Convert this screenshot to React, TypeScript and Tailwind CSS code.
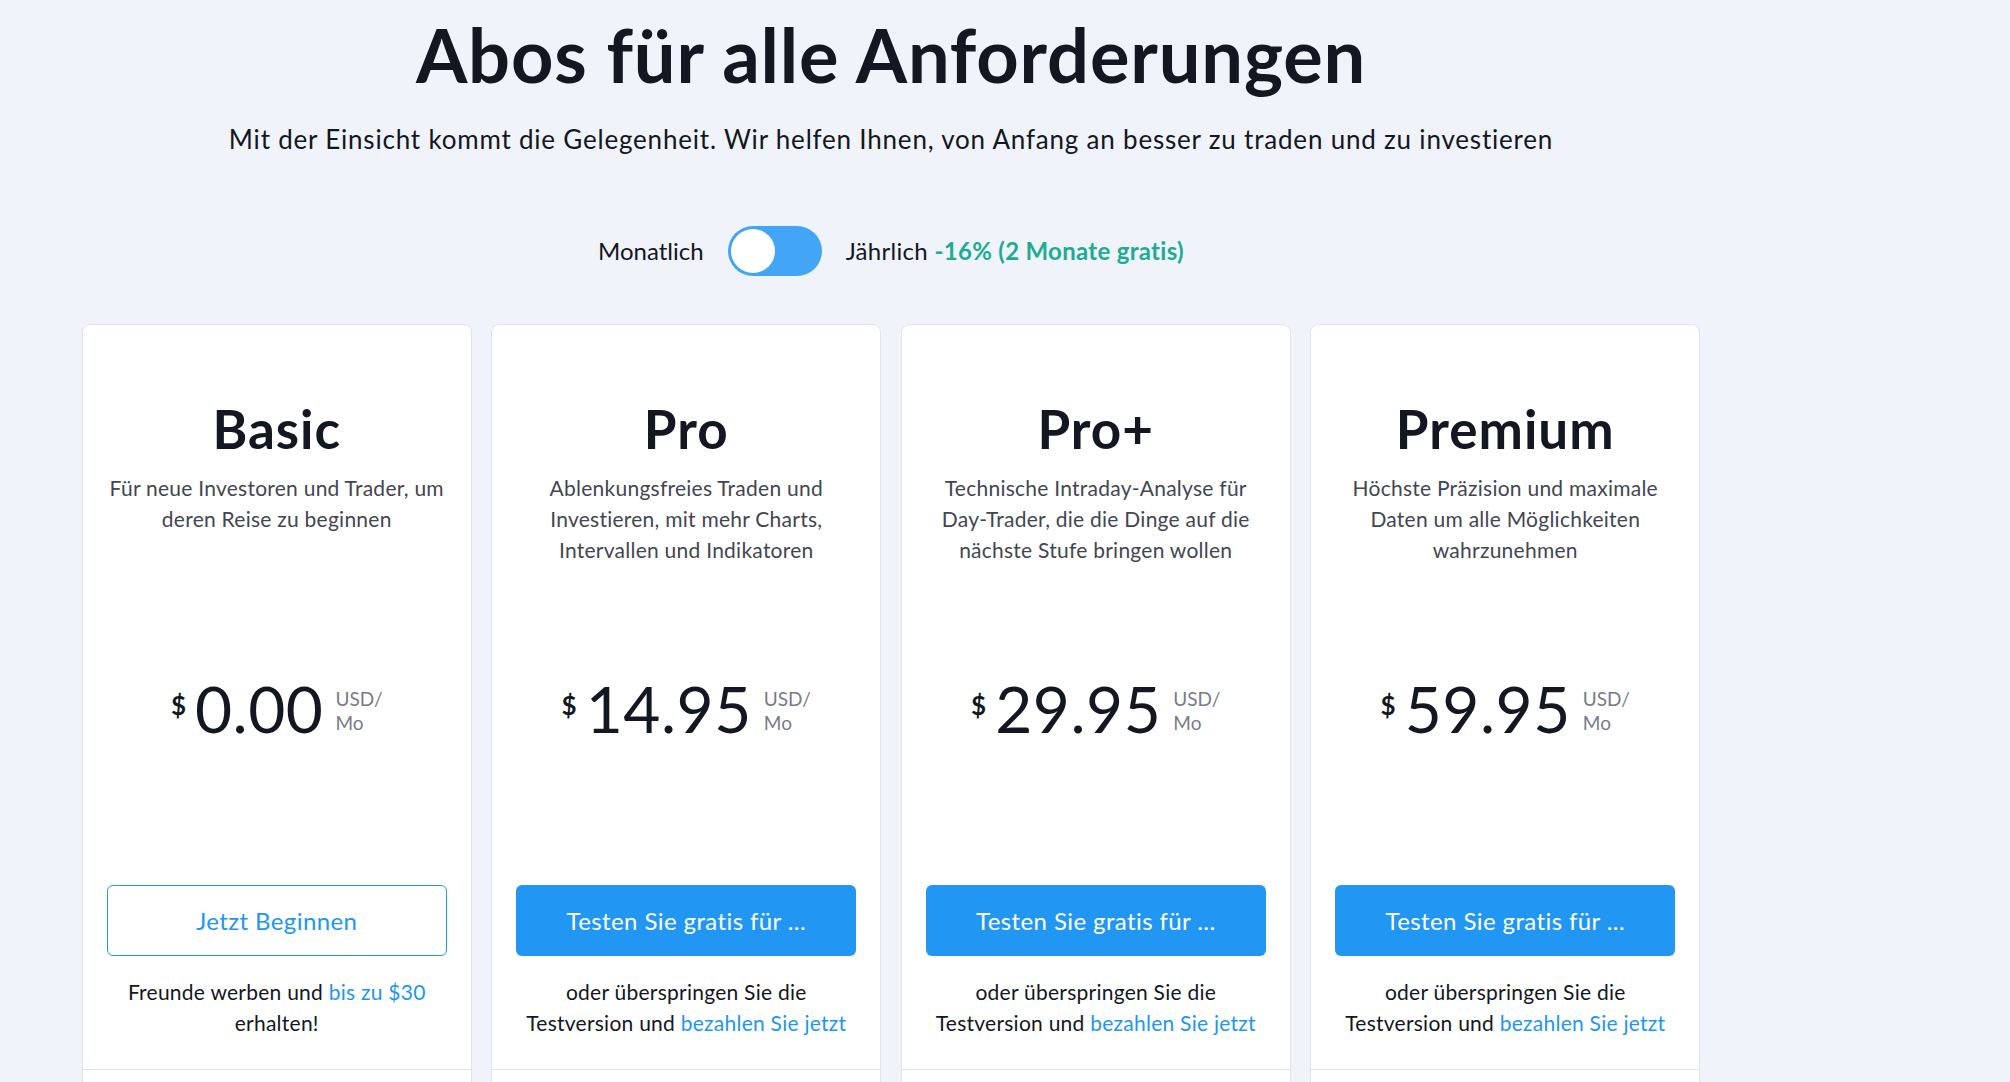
import React, { useState } from "react";

type Plan = {
  name: string;
  lines: string[];
  price: string;
  cta: string;
  outline?: boolean;
  note: [string, string, string];
};

const plans: Plan[] = [
  {
    name: "Basic",
    lines: ["Für neue Investoren und Trader, um", "deren Reise zu beginnen"],
    price: "0.00",
    cta: "Jetzt Beginnen",
    outline: true,
    note: ["Freunde werben und ", "bis zu $30", "erhalten!"],
  },
  {
    name: "Pro",
    lines: ["Ablenkungsfreies Traden und", "Investieren, mit mehr Charts,", "Intervallen und Indikatoren"],
    price: "14.95",
    cta: "Testen Sie gratis für ...",
    note: ["oder überspringen Sie die", "Testversion und ", "bezahlen Sie jetzt"],
  },
  {
    name: "Pro+",
    lines: ["Technische Intraday-Analyse für", "Day-Trader, die die Dinge auf die", "nächste Stufe bringen wollen"],
    price: "29.95",
    cta: "Testen Sie gratis für ...",
    note: ["oder überspringen Sie die", "Testversion und ", "bezahlen Sie jetzt"],
  },
  {
    name: "Premium",
    lines: ["Höchste Präzision und maximale", "Daten um alle Möglichkeiten", "wahrzunehmen"],
    price: "59.95",
    cta: "Testen Sie gratis für ...",
    note: ["oder überspringen Sie die", "Testversion und ", "bezahlen Sie jetzt"],
  },
];

const PlanCard: React.FC<{ plan: Plan }> = ({ plan }) => {
  return (
    <div className="bg-white rounded-lg border border-[#e0e3eb] overflow-hidden">
      <div className="px-6 pt-[74px] pb-[31px] flex flex-col items-center text-center">
        <h2 className="text-[53px] leading-[60px] font-bold tracking-[1px] text-[#131722]">{plan.name}</h2>
        <p className="mt-[13px] h-[93px] text-[21px] leading-[31px] tracking-[0.25px] text-[#434651] whitespace-nowrap">
          {plan.lines.map((line, i) => (
            <React.Fragment key={i}>
              {line}
              {i < plan.lines.length - 1 && <br />}
            </React.Fragment>
          ))}
        </p>

        <div className="mt-[112px] flex items-start text-[#131722]">
          <span className="mt-[15px] mr-[9px] text-[26px] leading-none font-bold">$</span>
          <span className="text-[64px] leading-[63px] tracking-[0.5px]">{plan.price}</span>
          <span className="mt-[10px] ml-[12px] text-[19px] leading-[24px] text-[#787b86] text-left">
            USD/
            <br />
            Mo
          </span>
        </div>

        <button
          className={`mt-[145px] w-full h-[71px] rounded-md text-[24px] tracking-[0.4px] ${
            plan.outline
              ? "border border-[#2196f3] text-[#2196f3] bg-white"
              : "bg-[#2196f3] text-white"
          }`}
        >
          {plan.cta}
        </button>

        <p className="mt-5 text-[21px] leading-[31px] tracking-[0.25px] text-[#131722] whitespace-nowrap">
          {plan.outline ? (
            <>
              {plan.note[0]}
              <a className="text-[#2196f3]">{plan.note[1]}</a>
              <br />
              {plan.note[2]}
            </>
          ) : (
            <>
              {plan.note[0]}
              <br />
              {plan.note[1]}
              <a className="text-[#2196f3]">{plan.note[2]}</a>
            </>
          )}
        </p>
      </div>
      <div className="border-t border-[#e0e3eb] h-[120px]" />
    </div>
  );
};

export default function App() {
  const [yearly, setYearly] = useState(false);

  return (
    <div className="min-h-screen bg-[#f0f3fa] font-['Lato',sans-serif] overflow-hidden">
      <div className="w-[1782px] flex flex-col items-center pt-[18px]">
        <h1 className="text-[74px] leading-[73px] font-bold tracking-[0.85px] text-[#131722]">
          Abos für alle Anforderungen
        </h1>
        <p className="mt-[33px] text-[26px] leading-[30px] tracking-[0.8px] text-[#131722]">
          Mit der Einsicht kommt die Gelegenheit. Wir helfen Ihnen, von Anfang an besser zu traden und zu investieren
        </p>

        <div className="mt-[72px] flex items-center gap-6 text-[24px] text-[#131722]">
          <span>Monatlich</span>
          <button
            onClick={() => setYearly(v => !v)}
            className={`w-[94px] h-[50px] rounded-full bg-[#42a5f5] p-[3px] flex ${yearly ? "justify-end" : "justify-start"}`}
          >
            <span className="w-[44px] h-[44px] rounded-full bg-white" />
          </button>
          <span className="tracking-[0.3px]">
            Jährlich <span className="font-bold text-[#22ab94]">-16% (2 Monate gratis)</span>
          </span>
        </div>

        <div className="mt-[48px] grid grid-cols-[repeat(4,390px)] gap-x-[19.5px]">
          {plans.map(plan => (
            <PlanCard key={plan.name} plan={plan} />
          ))}
        </div>
      </div>
    </div>
  );
}
